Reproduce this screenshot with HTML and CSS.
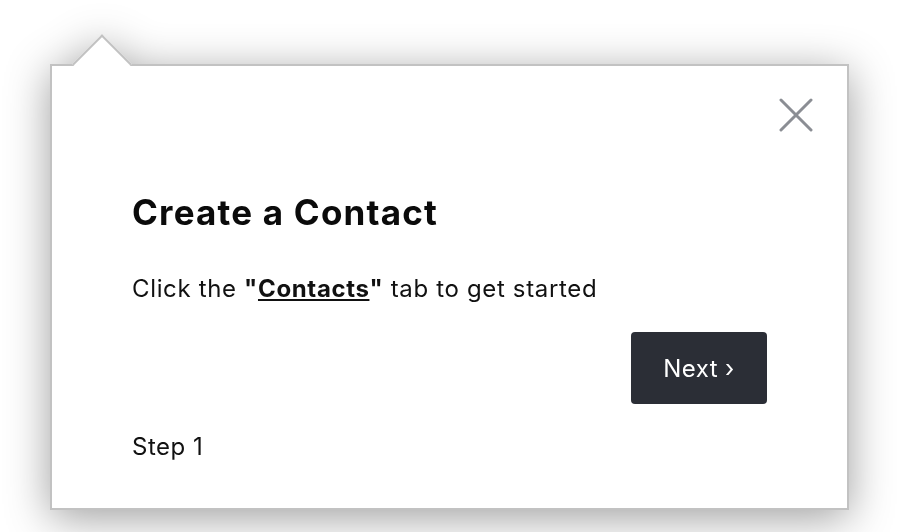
FILE: index.html
```html
<!DOCTYPE html>
<html>
<head>
<meta charset="utf-8">
<link rel="stylesheet" href="styles.css">
</head>
<body>
<div class="stage">
  <div class="popover">
    <div class="arrow"></div>
    <button class="close" aria-label="Close">
      <svg width="34" height="34" viewBox="0 0 34 34"><path d="M2 2 L32 32 M32 2 L2 32" stroke="#8b8e94" stroke-width="3" stroke-linecap="round" fill="none"/></svg>
    </button>
    <h1 class="title">Create a Contact</h1>
    <p class="desc">Click the <strong>"<u>Contacts</u>"</strong> tab to get started</p>
    <div class="actions"><button class="next">Next ›</button></div>
    <div class="step">Step 1</div>
  </div>
</div>
</body>
</html>
```
FILE: styles.css
```css
html, body { margin: 0; padding: 0; background: #fff; }
body { font-family: Inter, Lato, sans-serif; color: #111; width: 906px; height: 532px; overflow: hidden; }
.stage { padding: 64px 0 0 50px; filter: drop-shadow(0 8px 22px rgba(0,0,0,0.38)); }
.popover {
  position: relative;
  box-sizing: border-box;
  width: 799px;
  height: 446px;
  background: #fff;
  border: 2px solid #c2c2c2;
  padding: 0 80px 0 80px;
}
.arrow {
  position: absolute;
  left: 29px;
  top: -23px;
  width: 40px;
  height: 40px;
  background: #fff;
  border-top: 2px solid #c2c2c2;
  border-left: 2px solid #c2c2c2;
  transform: rotate(45deg);
}
.close {
  position: absolute;
  right: 34px;
  top: 32px;
  background: none;
  border: 0;
  padding: 0;
  width: 34px;
  height: 34px;
}
.title { margin: 124px 0 0; font-size: 35px; font-weight: 700; line-height: 44px; color: #0b0b0b; letter-spacing: 1.2px; }
.desc { margin: 40px 0 0; font-size: 24px; line-height: 30px; color: #111; letter-spacing: 0.65px; }
.desc strong { font-weight: 700; }
.actions { display: flex; justify-content: flex-end; margin-top: 28px; }
.next {
  width: 136px; height: 72px;
  margin-right: 0;
  background: #2b2e36; color: #fff;
  border: 0; border-radius: 4px;
  font-family: inherit; font-size: 24px; letter-spacing: 0.4px;
}
.step { margin-top: 28px; font-size: 24px; line-height: 30px; letter-spacing: 0.5px; }
```
